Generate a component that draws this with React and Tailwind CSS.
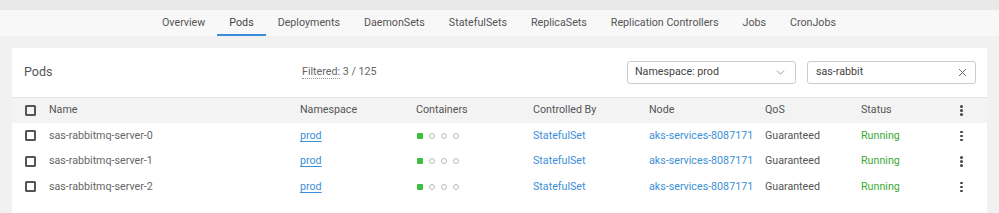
import { X, ChevronDown } from "lucide-react";

const tabs = [
  "Overview",
  "Pods",
  "Deployments",
  "DaemonSets",
  "StatefulSets",
  "ReplicaSets",
  "Replication Controllers",
  "Jobs",
  "CronJobs",
];

const pods = ["sas-rabbitmq-server-0", "sas-rabbitmq-server-1", "sas-rabbitmq-server-2"];

const cols = "grid grid-cols-[24px_251px_116px_117px_116px_116px_96px_99px_1fr] items-center";

function Checkbox() {
  return <span className="block h-[11px] w-[11px] rounded-[1.5px] border-2 border-[#555]" />;
}

function Kebab() {
  return (
    <span className="flex flex-col items-center gap-[1.5px]">
      <span className="h-[2.5px] w-[2.5px] rounded-full bg-[#444]" />
      <span className="h-[2.5px] w-[2.5px] rounded-full bg-[#444]" />
      <span className="h-[2.5px] w-[2.5px] rounded-full bg-[#444]" />
    </span>
  );
}

function Containers() {
  return (
    <span className="flex items-center gap-[6px] pl-[1px]">
      <span className="h-[6px] w-[6px] rounded-[1px] bg-[#3cbf3c]" />
      <span className="h-[6px] w-[6px] rounded-full border border-[#bbb]" />
      <span className="h-[6px] w-[6px] rounded-full border border-[#bbb]" />
      <span className="h-[6px] w-[6px] rounded-full border border-[#bbb]" />
    </span>
  );
}

export default function App() {
  return (
    <div
      className="h-[213px] w-[999px] overflow-hidden bg-[#f1f1f1] text-[10.7px] text-[#555]"
      style={{ fontFamily: "Roboto, 'Liberation Sans', sans-serif" }}
    >
      <div className="h-[10px] bg-[#e9e9e9]" />
      <nav className="flex h-[26px] bg-[#f8f8f8] pl-[150px]">
        {tabs.map((t) => (
          <div
            key={t}
            className={
              "flex items-center px-[12px] pt-[3px] " +
              (t === "Pods" ? "border-b-[2.5px] border-[#3a8ddd] text-[#444]" : "border-b-[2.5px] border-transparent text-[#555]")
            }
          >
            {t}
          </div>
        ))}
      </nav>

      <div className="pl-[12px] pr-[12px] pt-[12px]">
        <section className="bg-white">
          <div className="flex h-[49px] items-center pl-[12px] pr-[11px]">
            <h2 className="w-[278px] text-[12.5px] text-[#555]">Pods</h2>
            <div className="text-[#666]">
              <span className="border-b border-dotted border-[#999]">Filtered:</span> 3 / 125
            </div>
            <div className="ml-auto flex items-center gap-[11px]">
              <div className="flex h-[23px] w-[169px] items-center justify-between rounded-[3px] border border-[#ccc] pl-[7px] pr-[8px]">
                <span className="text-[#444]">Namespace: prod</span>
                <ChevronDown size={13} strokeWidth={1.5} className="text-[#888]" />
              </div>
              <div className="flex h-[23px] w-[169px] items-center justify-between rounded-[3px] border border-[#ccc] pl-[8px] pr-[6px]">
                <span className="text-[#444]">sas-rabbit</span>
                <X size={13} strokeWidth={1.6} className="text-[#555]" />
              </div>
            </div>
          </div>

          <div className={cols + " h-[26px] border-t border-[#e6e6e6] bg-[#f3f3f3] pl-[13px]"}>
            <Checkbox />
            <span>Name</span>
            <span>Namespace</span>
            <span>Containers</span>
            <span>Controlled By</span>
            <span>Node</span>
            <span>QoS</span>
            <span>Status</span>
            <span className="flex w-[3px] justify-center">
              <Kebab />
            </span>
          </div>

          <div className="pb-[20px]">
            {pods.map((p) => (
              <div key={p} className={cols + " h-[25.5px] pl-[13px]"}>
                <Checkbox />
                <span className="text-[#666]">{p}</span>
                <span>
                  <a className="text-[#3d8fd8] underline underline-offset-[1.5px]">prod</a>
                </span>
                <Containers />
                <span className="text-[#3d8fd8]">StatefulSet</span>
                <span className="text-[#3d8fd8]">aks-services-8087171</span>
                <span className="text-[#555]">Guaranteed</span>
                <span className="text-[#3aaa35]">Running</span>
                <span className="flex w-[3px] justify-center">
                  <Kebab />
                </span>
              </div>
            ))}
          </div>
        </section>
      </div>
    </div>
  );
}
